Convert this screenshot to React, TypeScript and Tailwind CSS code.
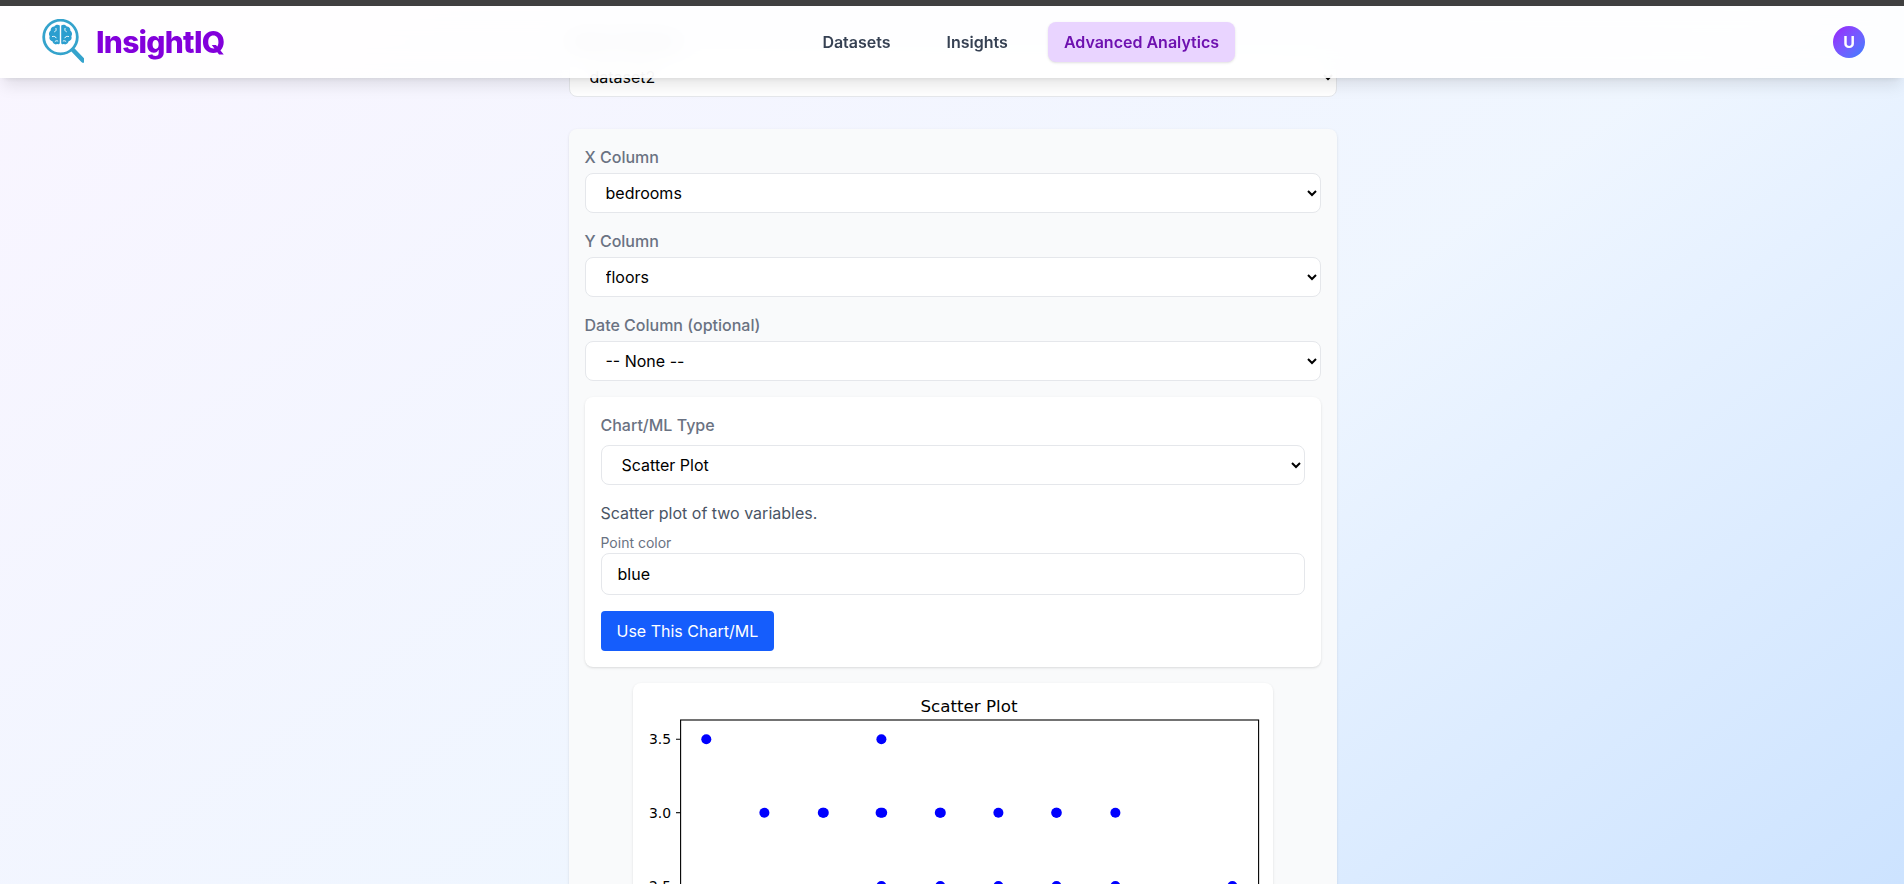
import { ReactNode } from 'react';

// overlapping points in the 3.0 row make some dots look wider
const chartRows = [
  { y: 56.3, xs: [73.3, 248.4] },
  { y: 129.7, xs: [131.4, 189.8, 190.8, 247.6, 249.2, 306.8, 307.8, 365.4, 423.2, 423.8, 482.4] },
  { y: 203, xs: [248.4, 307.3, 365.4, 423.5, 482.4, 599.4] },
];

function Logo() {
  return (
    <svg viewBox="0 0 44 44" className="-mt-0.5 h-11 w-11" fill="none">
      <circle cx="20.5" cy="18" r="16.8" stroke="#35a3cc" strokeWidth="2.800" />
      <path d="M33 31L43 41.500" stroke="#35a3cc" strokeWidth="4.500" strokeLinecap="round" />
      <path
        d="M19.800 6.500c-1.800-1.300-4.500-.9-5.500 1-2.300 0-4 1.800-3.600 4-1.900 1.400-2.300 4-1 5.800-1 2.300.4 4.600 2.700 5 .5 2.300 2.800 3.700 4.600 2.800 1.400.4 2.800 0 2.800-1.400z"
        fill="#2b9ecf"
      />
      <path
        d="M21.200 6.500c1.800-1.300 4.500-.9 5.500 1 2.300 0 4 1.800 3.600 4 1.900 1.400 2.300 4 1 5.800 1 2.300-.4 4.600-2.700 5-.5 2.300-2.800 3.700-4.600 2.800-1.400.4-2.800 0-2.800-1.400z"
        fill="#2b9ecf"
      />
      <path
        d="M16 9.500c.4 1.800 0 2.700-1.300 3.200M12.500 17.500c1.800-.4 3.100 0 3.600 1.300M17.800 22c-.9-.4-1.800-.4-2.700.5M25 9.500c-.4 1.800 0 2.700 1.300 3.200M28.500 17.500c-1.800-.4-3.100 0-3.600 1.300M23.200 22c.9-.4 1.800-.4 2.700.5"
        stroke="#fff"
        strokeWidth="1"
        strokeLinecap="round"
      />
    </svg>
  );
}

function NavLink({ children, active }: { children: ReactNode; active?: boolean }) {
  return (
    <a
      href="#"
      className={
        active
          ? 'rounded-lg bg-purple-200 px-4 py-2 font-semibold text-purple-800 shadow-sm'
          : 'rounded-lg px-4 py-2 font-semibold text-gray-700'
      }
    >
      {children}
    </a>
  );
}

function Select({ value, className = '' }: { value: string; className?: string }) {
  return (
    <select
      defaultValue={value}
      className={`block h-10 w-full rounded-lg border border-gray-200 bg-white px-4 ${className}`}
    >
      <option>{value}</option>
    </select>
  );
}

function Field({ label, value }: { label: string; value: string }) {
  return (
    <div className="mb-4">
      <label className="mb-1 block font-medium text-gray-500">{label}</label>
      <Select value={value} />
    </div>
  );
}

function ScatterChart() {
  return (
    <svg viewBox="0 0 640 480" className="block h-120 w-160 font-['DejaVu_Sans',sans-serif]">
      <text x="336" y="29" textAnchor="middle" fontSize="16.7">
        Scatter Plot
      </text>
      <rect x="47.6" y="37" width="578" height="430" fill="none" stroke="#000" strokeWidth="1.1" />
      {chartRows.map((row, i) => (
        <g key={row.y}>
          <line x1="43" x2="47.6" y1={row.y} y2={row.y} stroke="#000" strokeWidth="1.1" />
          <text x="38" y={row.y + 5} textAnchor="end" fontSize="13.9">
            {['3.5', '3.0', '2.5'][i]}
          </text>
          {row.xs.map((x) => (
            <circle key={x} cx={x} cy={row.y} r="5" fill="#0000ff" />
          ))}
        </g>
      ))}
    </svg>
  );
}

export default function App() {
  return (
    <div className="relative flex h-screen flex-col overflow-hidden font-['Inter',sans-serif]">
      {/* the page is scrolled: gradient runs over the full page height, not the window */}
      <div className="absolute inset-x-0 -top-24 h-350 bg-gradient-to-br from-purple-50 via-blue-50 to-blue-200" />
      <div className="relative h-1.5 shrink-0 bg-neutral-700" />
      <div className="relative flex-1 pl-px">
        <nav className="absolute inset-x-0 top-0 z-10 flex h-18 items-center justify-between bg-white/90 px-10 shadow-lg backdrop-blur-md">
          <div className="flex items-center gap-3">
            <Logo />
            <span className="text-3xl font-extrabold tracking-tight text-purple-700">InsightIQ</span>
          </div>
          <div className="flex items-center gap-6">
            <NavLink>Datasets</NavLink>
            <NavLink>Insights</NavLink>
            <NavLink active>Advanced Analytics</NavLink>
          </div>
          <div className="-mr-px pl-4">
            <div className="flex h-8 w-8 items-center justify-center rounded-full bg-gradient-to-br from-purple-600 to-blue-500 font-bold text-white">
              U
            </div>
          </div>
        </nav>

        <main className="mx-auto -mt-px w-full max-w-3xl pt-6">
          <label className="mb-1 block font-medium text-gray-700">Select Dataset</label>
          <Select value="dataset2" className="mb-8" />

          <div className="rounded-lg bg-gray-50 p-4 shadow-sm">
            <Field label="X Column" value="bedrooms" />
            <Field label="Y Column" value="floors" />
            <Field label="Date Column (optional)" value="-- None --" />

            <div className="mb-4 rounded-lg bg-white p-4 shadow">
              <label className="mb-2 block font-medium text-gray-500">Chart/ML Type</label>
              <Select value="Scatter Plot" />
              <p className="mt-4 text-gray-600">Scatter plot of two variables.</p>
              <label className="mt-2 block text-sm text-gray-500">Point color</label>
              <input
                defaultValue="blue"
                className="block w-full rounded-lg border border-gray-200 bg-white px-4 py-2"
              />
              <button className="mt-4 h-10 rounded bg-blue-600 px-4 text-white">
                Use This Chart/ML
              </button>
            </div>

            <div className="mx-auto w-fit overflow-hidden rounded-lg bg-white shadow-sm">
              <ScatterChart />
            </div>
          </div>
        </main>
      </div>
    </div>
  );
}
